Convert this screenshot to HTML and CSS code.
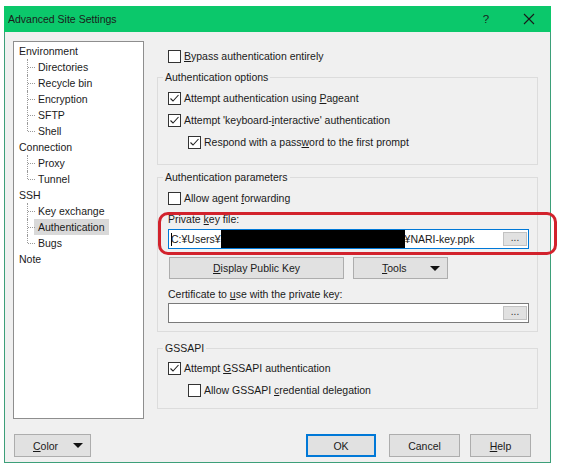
FILE: index.html
```html
<!DOCTYPE html>
<html>
<head>
<meta charset="utf-8">
<link rel="stylesheet" href="styles.css">
</head>
<body>
<div class="window">
  <div class="titlebar">
    <span class="title">Advanced Site Settings</span>
    <span class="help-q">?</span>
    <span class="close"><svg width="12" height="12" viewBox="0 0 12 12"><path d="M1 1L11 11M11 1L1 11" stroke="#1a1a1a" stroke-width="1.1" fill="none"/></svg></span>
  </div>
  <div class="client">
    <div class="main">
      <div class="tree">
        <div class="node root">Environment</div>
        <div class="node child">Directories</div>
        <div class="node child">Recycle bin</div>
        <div class="node child">Encryption</div>
        <div class="node child">SFTP</div>
        <div class="node child last">Shell</div>
        <div class="node root">Connection</div>
        <div class="node child">Proxy</div>
        <div class="node child last">Tunnel</div>
        <div class="node root">SSH</div>
        <div class="node child">Key exchange</div>
        <div class="node child"><span class="sel">Authentication</span></div>
        <div class="node child last">Bugs</div>
        <div class="node root">Note</div>
      </div>
      <div class="pane">
        <div class="row top-row"><span class="cb"></span><span><u>B</u>ypass authentication entirely</span></div>
        <fieldset class="group g1">
          <legend>Authentication options</legend>
          <div class="row"><span class="cb checked"><svg width="11" height="11" viewBox="0 0 11 11"><path d="M1.5 5.5L4 8L9.5 2" stroke="#222" stroke-width="1.1" fill="none"/></svg></span><span>Attempt authentication using <u>P</u>ageant</span></div>
          <div class="row"><span class="cb checked"><svg width="11" height="11" viewBox="0 0 11 11"><path d="M1.5 5.5L4 8L9.5 2" stroke="#222" stroke-width="1.1" fill="none"/></svg></span><span>Attempt 'keyboard-<u>i</u>nteractive' authentication</span></div>
          <div class="row indent"><span class="cb checked"><svg width="11" height="11" viewBox="0 0 11 11"><path d="M1.5 5.5L4 8L9.5 2" stroke="#222" stroke-width="1.1" fill="none"/></svg></span><span>Respond with a pass<u>w</u>ord to the first prompt</span></div>
        </fieldset>
        <fieldset class="group g2">
          <legend>Authentication parameters</legend>
          <div class="row"><span class="cb"></span><span>Allow agent <u>f</u>orwarding</span></div>
          <div class="label">Private <u>k</u>ey file:</div>
          <div class="edit focused">
            <span class="caret"></span><span class="val">C:¥Users¥</span><span class="redact"></span><span class="val">¥NARI-key.ppk</span>
            <span class="browse">...</span>
          </div>
          <div class="btnrow">
            <div class="btn display"><span><u>D</u>isplay Public Key</span></div>
            <div class="btn tools"><span class="tools-text"><u>T</u>ools</span><span class="arrow"></span></div>
          </div>
          <div class="label cert">Certificate to <u>u</u>se with the private key:</div>
          <div class="edit">
            <span class="browse">...</span>
          </div>
        </fieldset>
        <fieldset class="group g3">
          <legend>GSSAPI</legend>
          <div class="row"><span class="cb checked"><svg width="11" height="11" viewBox="0 0 11 11"><path d="M1.5 5.5L4 8L9.5 2" stroke="#222" stroke-width="1.1" fill="none"/></svg></span><span>Attempt <u>G</u>SSAPI authentication</span></div>
          <div class="row indent"><span class="cb"></span><span>Allow GSSAPI <u>c</u>redential delegation</span></div>
        </fieldset>
      </div>
    </div>
    <div class="footer">
      <div class="btn color"><span class="color-text"><u>C</u>olor</span><span class="arrow"></span></div>
      <div class="spacer"></div>
      <div class="btn ok">OK</div>
      <div class="btn cancel">Cancel</div>
      <div class="btn helpbtn"><u>H</u>elp</div>
    </div>
  </div>
</div>
<div class="highlight"></div>
</body>
</html>
```

FILE: styles.css
```css
html, body {
  margin: 0;
  padding: 0;
  background: #ffffff;
}
body {
  font-family: "Liberation Sans", Arial, sans-serif;
  font-size: 10.5px;
  color: #1a1a1a;
  width: 562px;
  height: 476px;
  position: relative;
  overflow: hidden;
}
u { text-decoration: underline; text-underline-offset: 1px; }

.window {
  margin: 6px 0 0 4px;
  width: 547px;
  height: 457px;
  box-sizing: border-box;
  border: 1px solid #3d9f79;
  border-top: none;
  display: flex;
  flex-direction: column;
}
.titlebar {
  height: 26px;
  margin: 0 -1px;
  background: #0bc86b;
  display: flex;
  align-items: center;
  padding-left: 4px;
  font-size: 10.5px;
  color: #1b1b1b;
}
.title { flex: 1; }
.help-q { width: 12px; text-align: center; margin-right: 31px; font-size: 11.5px; }
.close { width: 12px; height: 12px; margin-right: 16px; display: flex; }

.client {
  flex: 1;
  background: #f0f0f0;
  padding: 9px 12px 5px 8px;
  display: flex;
  flex-direction: column;
}
.main {
  display: grid;
  grid-template-columns: 131px 381px;
  column-gap: 13px;
  height: 378px;
}
.tree {
  background: #ffffff;
  border: 1px solid #8e8e8e;
  padding-top: 1px;
  box-sizing: border-box;
  height: 378px;
}
.node {
  height: 16px;
  line-height: 16px;
  position: relative;
  white-space: nowrap;
}
.root { padding-left: 5px; }
.child { padding-left: 24px; }
.child::before {
  content: "";
  position: absolute;
  left: 13px;
  top: 0;
  height: 16px;
  border-left: 1px dotted #9a9a9a;
}
.child.last::before { height: 8px; }
.child::after {
  content: "";
  position: absolute;
  left: 14px;
  top: 8px;
  width: 7px;
  border-top: 1px dotted #9a9a9a;
}
.sel {
  display: inline-block;
  background: #d9d9d9;
  padding: 0 4px;
  margin-left: -4px;
  height: 16px;
}

.pane { display: flex; flex-direction: column; }
.row {
  height: 22px;
  display: flex;
  align-items: center;
  padding-left: 0;
  white-space: nowrap;
}
.top-row { height: 26px; padding-top: 2px; padding-left: 11px; }
.indent { padding-left: 20px; }
.cb {
  width: 13px;
  height: 13px;
  box-sizing: border-box;
  border: 1px solid #333333;
  background: #ffffff;
  margin-right: 3px;
  display: flex;
  align-items: center;
  justify-content: center;
  flex: none;
}
.group {
  margin: 0;
  border: 1px solid #dcdcdc;
  padding: 2px 8px 11px 10px;
  min-width: 0;
}
.group legend {
  padding: 0 2px;
  margin-left: -5px;
  line-height: 16px;
  height: 16px;
}
.g2 { margin-top: 4px; padding-bottom: 8px; }
.g3 { margin-top: 8px; padding-top: 1px; padding-bottom: 7px; }

.label { height: 20px; line-height: 20px; }
.label.cert { height: 18px; line-height: 18px; margin-top: 6px; }
.edit {
  width: 361px;
  height: 20px;
  box-sizing: border-box;
  border: 1px solid #7a7a7a;
  background: #ffffff;
  display: flex;
  align-items: center;
  padding-left: 2px;
  white-space: nowrap;
  overflow: hidden;
}
.edit.focused { border-color: #0078d7; }
.caret { width: 0; height: 13px; border-left: 1px solid #000; margin-right: -1px; }
.redact { width: 184px; height: 18px; background: #000; flex: none; }
.browse {
  margin-left: auto;
  margin-right: 1px;
  width: 24px;
  height: 14px;
  box-sizing: border-box;
  background: #e1e1e1;
  border: 1px solid #c2c2c2;
  text-align: center;
  line-height: 10px;
  font-size: 10px;
  color: #333;
  flex: none;
}

.btnrow { display: flex; gap: 9px; margin-top: 8px; height: 22px; padding-left: 1px; }
.btn {
  box-sizing: border-box;
  height: 22px;
  background: #e1e1e1;
  border: 1px solid #adadad;
  display: flex;
  align-items: center;
  justify-content: center;
  white-space: nowrap;
}
.display { width: 175px; }
.tools { width: 95px; justify-content: flex-start; }
.tools-text { margin-left: 28px; flex: 1; }
.arrow {
  width: 0; height: 0;
  border-left: 5px solid transparent;
  border-right: 5px solid transparent;
  border-top: 5px solid #111;
  margin-right: 7px;
}

.footer {
  margin-top: 15px;
  display: flex;
  height: 23px;
  padding-right: 7px;
}
.footer .btn { height: 23px; }
.color { width: 77px; margin-left: 1px; justify-content: flex-start; }
.color-text { margin-left: 18px; flex: 1; }
.spacer { flex: 1; }
.ok { width: 70px; border: 2px solid #0078d7; }
.cancel { width: 71px; margin-left: 13px; }
.helpbtn { width: 61px; margin-left: 10px; }

.highlight {
  position: absolute;
  left: 158px;
  top: 212px;
  width: 399px;
  height: 43px;
  box-sizing: border-box;
  border: 3px solid #d2222c;
  border-radius: 10px;
}
```
